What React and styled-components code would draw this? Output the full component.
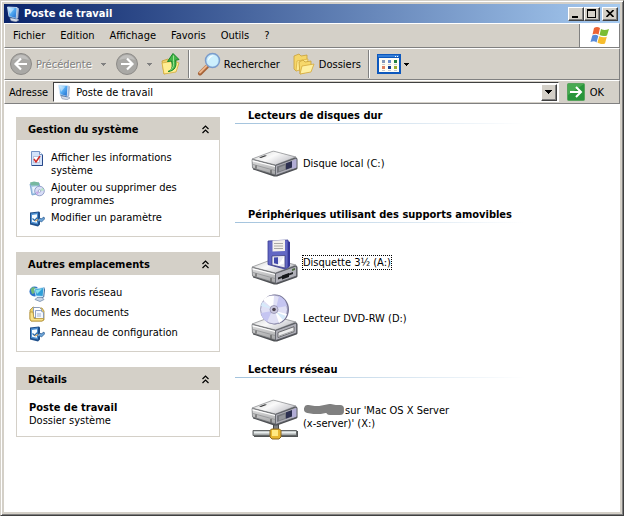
import styled, { createGlobalStyle } from "styled-components";

const GlobalStyle = createGlobalStyle`
  * {
    box-sizing: border-box;
  }
  body {
    margin: 0;
  }
  body, button, input {
    font-family: "DejaVu Sans Condensed", "DejaVu Sans", sans-serif;
    font-size: 11px;
    line-height: 13px;
    color: #000;
  }
  svg {
    display: block;
    flex-shrink: 0;
  }
`;

const Fenetre = styled.div`
  display: flex;
  flex-direction: column;
  min-height: 100vh;
  padding: 3px;
  background: #d4d0c8;
  border: 1px solid;
  border-color: #d4d0c8 #404040 #404040 #d4d0c8;
  box-shadow: inset 1px 1px #fff, inset -1px -1px #808080;
`;
const BarreTitre = styled.header`
  display: flex;
  align-items: center;
  height: 19px;
  padding: 0 2px 0 2px;
  gap: 2px;
  background: linear-gradient(90deg, #0a246a, #a6caf0);
  color: #fff;
`;
const Titre = styled.h1`
  flex: 1;
  margin: 0;
  font-size: 11px;
`;
const BoutonsFenetre = styled.div`
  display: flex;
`;
const BoutonFenetre = styled.button`
  display: flex;
  align-items: center;
  justify-content: center;
  width: 16px;
  height: 14px;
  padding: 0;
  margin-left: ${({ $espace }) => ($espace ? "2px" : "0")};
  background: #d4d0c8;
  border: 1px solid;
  border-color: #fff #404040 #404040 #fff;
  box-shadow: inset -1px -1px #808080;
`;
const Barre = styled.div`
  display: flex;
  align-items: center;
  height: ${({ $hauteur }) => $hauteur};
  padding: ${({ $marge }) => $marge || "0"};
  border-top: 1px solid #fff;
  border-left: 1px solid #fff;
  border-bottom: 1px solid #808080;
  border-right: 1px solid #808080;
`;
const Menu = styled.nav`
  display: flex;
  flex: 1;
  gap: 15px;
`;
const BoutonPlat = styled.button`
  display: flex;
  align-items: center;
  gap: ${({ $espace }) => $espace || "0"};
  padding: 0;
  border: 0;
  background: none;
  white-space: nowrap;

  &:disabled {
    color: #808080;
    text-shadow: 1px 1px #fff;
  }
`;
const Logo = styled.div`
  display: flex;
  align-items: center;
  justify-content: center;
  align-self: stretch;
  width: 40px;
  background: #fff;
  border-left: 1px solid #808080;
`;
const Outils = styled.div`
  display: flex;
  align-items: center;
  gap: ${({ $espace }) => $espace};
`;
const Separateur = styled.span`
  width: 2px;
  height: 28px;
  margin: 0 7px;
  border-left: 1px solid #808080;
  border-right: 1px solid #fff;
`;
const Champ = styled.div`
  display: flex;
  align-items: center;
  flex: 1;
  height: 20px;
  margin: 0 8px 0 5px;
  padding: 0 1px 0 3px;
  background: #fff;
  border: 1px solid;
  border-color: #404040 #fff #fff #404040;
`;
const Saisie = styled.input`
  flex: 1;
  min-width: 0;
  padding: 0 0 0 3px;
  border: 0;
  outline: 0;
  background: none;
`;
const BoutonListe = styled(BoutonFenetre)`
  height: 17px;
`;
const Contenu = styled.main`
  display: flex;
  flex: 1;
  background: #fff;
`;
const Volet = styled.aside`
  display: flex;
  flex-direction: column;
  flex-shrink: 0;
  gap: 15px;
  width: 216px;
  padding: 13px 0 13px 12px;
`;
const Panneau = styled.section`
  border: 1px solid #d4d0c8;
  border-top: 0;
`;
const EnTete = styled.div`
  display: flex;
  align-items: center;
  justify-content: space-between;
  height: 23px;
  padding: 2px 10px 0 11px;
  background: #d4d0c8;
`;
const TitrePanneau = styled.h2`
  margin: 0;
  font-size: 11px;
`;
const Corps = styled.div`
  display: flex;
  flex-direction: column;
  gap: 4px;
  padding: 11px 12px 9px;
`;
const Tache = styled.a`
  display: flex;
  gap: 6px;
  min-height: 16px;
  color: #000;
  text-decoration: none;
`;
const Detail = styled.p`
  margin: 0;
`;
const Lecteurs = styled.div`
  flex: 1;
  min-width: 0;
  padding-left: 15px;
`;
const Groupe = styled.section`
  padding-bottom: 16px;
`;
const TitreGroupe = styled.h2`
  height: 20px;
  margin: 0 0 15px;
  padding: 5px 0 0 13px;
  font-size: 11px;
  background: linear-gradient(90deg, #a3c3dd, #fff 290px) bottom / 100% 1px
    no-repeat;
`;
const Liste = styled.div`
  display: flex;
  flex-direction: column;
  align-items: flex-start;
  gap: 8px;
  padding-left: 16px;
`;
const Lecteur = styled.a`
  display: flex;
  align-items: center;
  gap: 4px;
  min-height: 48px;
  color: #000;
  text-decoration: none;
`;
const Nom = styled.span`
  max-width: 150px;
  outline: ${({ $actif }) => ($actif ? "1px dotted #000" : "none")};

  svg {
    display: inline-block;
    vertical-align: -1px;
  }
`;

const IconePoste = () => (
  <svg width="16" height="16" viewBox="0 0 16 16">
    <defs>
      <linearGradient id="ecran" x2="1" y2="1">
        <stop offset="0" stopColor="#bfe8ff" />
        <stop offset="0.45" stopColor="#57aff5" />
        <stop offset="1" stopColor="#1763c9" />
      </linearGradient>
    </defs>
    <path d="M4 12l6 0 3 2-3 1.700-5-1z" fill="#d5dce8" stroke="#7d8ba5" strokeWidth=".6" />
    <path d="M11 1.500l2 1-.8 9.500-2 1z" fill="#a9b6cf" />
    <path d="M1.500 1l9.500.5-.8 11L3 10.500z" fill="url(#ecran)" stroke="#dceafa" strokeWidth=".8" />
    <path d="M2.500 2l6 .4L4 8z" fill="#fff" opacity=".45" />
    <path d="M3 11l7.500 2" stroke="#285894" strokeWidth=".7" />
  </svg>
);

const IconeRond = ({ retour }) => (
  <svg width="24" height="24" viewBox="0 0 24 24">
    <circle cx="12" cy="12" r="10.5" fill="#a9a8a5" stroke="#8d8b88" />
    <path d="M4 8a9 9 0 0 1 16 0q-8-3-16 0" fill="#c0bfbd" />
    <path
      d={
        retour
          ? "M18 12H7M12 6.500L6.500 12l5.500 5.500"
          : "M6 12h11M12 6.500l5.500 5.500-5.500 5.500"
      }
      fill="none"
      stroke="#fff"
      strokeWidth="2.200"
    />
  </svg>
);

const Fleche = ({ couleur = "#000" }) => (
  <svg width="5" height="3" viewBox="0 0 5 3" shapeRendering="crispEdges">
    <path d="M0 0h5v1H4v1H3v1H2V2H1V1H0z" fill={couleur} />
  </svg>
);

const IconeParent = () => (
  <svg width="20" height="24" viewBox="0 0 20 24">
    <path d="M1 9l6-2 2 1.500 6-1.500v11L3 22z" fill="#eed06b" stroke="#c89e32" strokeWidth=".8" />
    <path d="M1 11l12-2 5 2-3 9L3 22z" fill="#ffed92" stroke="#d6ad3c" strokeWidth=".8" />
    <path
      d="M7 19.500c4-1 5-5 3.500-10.500L6.500 9.500 12 1.500l6 6-3.500.8C16 14 14 19 7 19.500z"
      fill="#43b649"
      stroke="#16852a"
    />
    <path d="M12.500 3.500v6c.5 4-.5 7-3 8.500" stroke="#a2e495" fill="none" />
  </svg>
);

const IconeLoupe = () => (
  <svg width="24" height="24" viewBox="0 0 24 24">
    <path d="M10 14.500L3 21.500" stroke="#a66338" strokeWidth="4" strokeLinecap="round" />
    <path d="M9.500 14L3 20.500" stroke="#edb58a" strokeWidth="2" strokeLinecap="round" />
    <circle cx="15.500" cy="8.500" r="7" fill="#bce7fb" stroke="#7c9ccb" strokeWidth="1.500" />
    <circle cx="15.500" cy="8.500" r="5.500" fill="#cdeffd" />
    <path d="M11 9a5 5 0 0 1 7-5c-4 0-5 2-7 5" fill="#fff" />
  </svg>
);

const IconeDossiers = () => (
  <svg width="24" height="22" viewBox="0 0 24 22">
    <path d="M2 3l5-2 2 2 6-1v11L4 18 2 16z" fill="#f5d66a" stroke="#c89f36" strokeWidth=".8" />
    <path d="M4 18L5 8l11-2-1 9z" fill="#ffeb92" stroke="#d8b044" strokeWidth=".8" />
    <path d="M7 9l4-2 2 2 6-1v10L8 21z" fill="#f7d86b" stroke="#c89f36" strokeWidth=".8" />
    <path d="M8 21l2-8 12-2-3 8z" fill="#fff0a1" stroke="#d5aa3b" strokeWidth=".8" />
  </svg>
);

const IconeAffichage = () => (
  <svg width="24" height="20" viewBox="0 0 24 20" shapeRendering="crispEdges">
    <rect width="24" height="20" rx="1" fill="#0d58bd" />
    <rect x="1" y="1" width="21" height="2" fill="#347ed7" />
    <path d="M18 2h1v1h-1zM20 2h1v1h-1z" fill="#fff" />
    <rect x="2" y="4" width="20" height="14" fill="#fffdf5" />
    <path d="M5 6h3v3H5z" fill="#8799bb" />
    <path d="M11 6h3v3h-3z" fill="#6b8dd0" />
    <path d="M17 6h3v3h-3z" fill="#258143" />
    <path d="M5 12h3v3H5z" fill="#df8060" />
    <path d="M11 12h3v3h-3z" fill="#173f92" />
    <path d="M17 12h3v3h-3z" fill="#9aae32" />
    <path d="M5 10h3M11 10h3M17 10h3M5 16h3M11 16h3M17 16h3" stroke="#c7cad0" />
  </svg>
);

const IconeWindows = () => (
  <svg width="20" height="20" viewBox="0 0 20 20">
    <path d="M4 2c2-1.500 4-1.500 6 0L8.500 8.800C7 7.500 5 7.500 2.500 8.500z" fill="#ec6333" />
    <path d="M11 3c3 1.500 5 1 8 0l-2 6.500c-3 1-5 .5-7.500-.5z" fill="#7bbd35" />
    <path d="M2.300 9.500c2.500-1 4-1 6 .5L6.500 16.500C5 15 3 15 .5 16z" fill="#5689d8" />
    <path d="M9.200 10.200c2.500 1 4.800 1.500 7.600.5L15 17.500c-3 1-5 .5-7.500-1z" fill="#f7bd2e" />
  </svg>
);

const IconeOk = () => (
  <svg width="18" height="18" viewBox="0 0 18 18">
    <rect x=".5" y=".5" width="17" height="17" rx="1" fill="#27953b" stroke="#58a35d" />
    <path d="M1 1h16L1 12z" fill="#59b35c" opacity=".7" />
    <path d="M3 9h11M9 4l5 5-5 5" stroke="#fff" strokeWidth="2" fill="none" />
  </svg>
);

const IconeInfos = () => (
  <svg width="16" height="16" viewBox="0 0 16 16">
    <path d="M2.500.5h8l3 3v11h-11z" fill="#d4e3fa" stroke="#7391c4" />
    <path d="M13.500 4v10.500H3" fill="none" stroke="#28498a" />
    <path d="M10.500.5v3h3" fill="#fff" stroke="#7494c3" />
    <rect x="4.500" y="5.500" width="6" height="6" fill="#fff" stroke="#b9c3dc" />
    <path d="M5 8l2 3 4-6" fill="none" stroke="#d12b29" strokeWidth="1.500" />
  </svg>
);

const IconeProgrammes = () => (
  <svg width="16" height="16" viewBox="0 0 16 16">
    <path d="M1 3l9-1 2 10-9 2z" fill="#a8c9e8" stroke="#6d9cca" strokeWidth=".8" />
    <path d="M1 1.500l4-1 5 1v3H2z" fill="#77b8a0" />
    <path d="M3 6l7-1 1 6-7 1z" fill="#e9f3fd" />
    <circle cx="10.500" cy="10" r="4.800" fill="#d9def8" stroke="#7e8dbb" strokeWidth=".8" />
    <path d="M10.500 10l3-3.500 1.500 3z" fill="#b8e6c6" />
    <path d="M10.500 10l-4 1 2 3z" fill="#c9a9e7" />
    <circle cx="10.500" cy="10" r="1.300" fill="#fff" stroke="#7d8bb4" strokeWidth=".6" />
  </svg>
);

const IconeParametre = () => (
  <svg width="16" height="16" viewBox="0 0 16 16">
    <path d="M1 1.500l9-1 1 1v12l-2 2-8-2z" fill="#1f4f8b" />
    <path d="M2 2.500l7-1v12l-7-1.500z" fill="#4d8fd0" />
    <path d="M3 4l5-.7v8.500l-5-1z" fill="#f5fbff" />
    <path d="M3.500 7.500l2 2 3-3" fill="none" stroke="#2a69a7" strokeWidth="1.200" />
    <path d="M8 9l3-2 1 1 3-2 .5 2-3 3-1.500-1-2 1z" fill="#6da5d8" stroke="#24568e" strokeWidth=".7" />
    <path d="M6 10l3-1.500" stroke="#d5a15e" strokeWidth="1.300" />
  </svg>
);

const IconeReseau = () => (
  <svg width="16" height="16" viewBox="0 0 16 16">
    <circle cx="5.500" cy="5.500" r="5" fill="#2e73c9" />
    <path d="M1.500 3l2.500-2 3 1-2 3 1 2-3 1z" fill="#70ba78" />
    <path d="M5.500 3l9.500-1.500-1 9-7-.5z" fill="#2f9fd8" stroke="#d0e9f7" strokeWidth=".8" />
    <path d="M6.500 4l6.500-1-5 5z" fill="#8be1eb" />
    <path d="M15 1.500l.7 1-1 8.500-2 1" stroke="#476d9d" fill="none" />
    <path d="M8 11.500l5 0 2 2-4 2-5-2z" fill="#c7d6e8" stroke="#637fa3" strokeWidth=".7" />
  </svg>
);

const IconeDocuments = () => (
  <svg width="16" height="16" viewBox="0 0 16 16">
    <path d="M1 4l3-3 3 1h6l2 3v9l-2 1H2l-1-2z" fill="#ecd06c" stroke="#ac8c36" strokeWidth=".8" />
    <path d="M4.500 1.500h6l2 2v8h-8z" fill="#fff" stroke="#738bb6" strokeWidth=".8" />
    <path d="M6.500 4.500h5l3 2v7h-8z" fill="#f4f8ff" stroke="#738bb6" strokeWidth=".8" />
    <path d="M8 8h4M8 10h4" stroke="#a4b3cc" />
    <path d="M1 6h3l1 6.500h9.500V14l-1.500 1H2l-1-2z" fill="#f9e28a" stroke="#b59334" strokeWidth=".8" />
  </svg>
);

const Chevrons = () => (
  <svg width="7" height="9" viewBox="0 0 7 9">
    <path d="M.5 4l3-3 3 3M.5 8l3-3 3 3" fill="none" stroke="#000" strokeWidth="1.200" />
  </svg>
);

const Boitier = ({ type }) => (
  <g>
    <defs>
      <linearGradient id={`dessus-${type}`} x2="1" y2=".6">
        <stop offset="0" stopColor="#cfd0d0" />
        <stop offset=".5" stopColor="#fafafa" />
        <stop offset="1" stopColor="#c2c2c8" />
      </linearGradient>
      <linearGradient id={`cote-${type}`} x2="0" y2="1">
        <stop offset="0" stopColor="#e0e0e0" />
        <stop offset="1" stopColor="#a0a1a3" />
      </linearGradient>
    </defs>
    <path d="M1.500 14L21 6q1.500-.6 3 0l21 5.500q1.500.5 1.500 2V22q0 1-1 1.500L26 30.500h-3L2 23.500z" fill="#4d4f53" />
    <path d="M1 13l20-7.500q1.500-.6 3 0l21 5.500-20.500 8z" fill={`url(#dessus-${type})`} stroke="#85878a" strokeWidth=".7" />
    <path d="M1 13.500l23.500 6V29L1.500 22z" fill={`url(#cote-${type})`} stroke="#6d7072" strokeWidth=".7" />
    <path d="M1.500 14.200l22.500 5.700v1L1.500 15.500z" fill="#fff" />
    <path d="M2 18.500l22 6" stroke="#909294" strokeWidth=".8" />
    <path d="M24.500 19.500L45.500 12v10l-21 7.500z" fill="#b0b0b8" stroke="#55575e" strokeWidth=".7" />
    <path d="M5 19.500v3M20 24v3.500" stroke="#444" />
    {type !== "disquette" && type !== "dvd" && (
      <>
        <path d="M8 11.500l6-2.300 2 .6-6 2.300z" fill="#3b3c3d" />
        <path d="M26 20.500l9-3.200v6.500L26 27z" fill="#77797f" />
        <path d="M28 21.500l6-2.200v4L28 25.500z" fill="#94969b" />
        <path d="M35 17.300l6-2.200v6.500L35 23.800z" fill="#2d3050" />
        <path d="M41 15.100l4.500-2v8.500L41 23z" fill="#b2add6" />
      </>
    )}
    {type === "disquette" && (
      <>
        <path d="M27 23.500l15-5.500v2l-15 5.500z" fill="#222426" />
        <path d="M31 21.500l7-2.500v4l-7 2.500z" fill="#15171a" />
        <path d="M41 15l3-1v2l-3 1z" fill="#4c6b3f" />
      </>
    )}
    {type === "dvd" && (
      <>
        <path d="M27 21.500l16-5.800v5L27 26.500z" fill="#ececec" stroke="#505256" strokeWidth=".8" />
        <path d="M28 25l14-5" stroke="#8e9094" strokeWidth=".8" />
      </>
    )}
  </g>
);

const IconeLecteur = ({ type }) => (
  <svg width="48" height="48" viewBox="0 0 48 48">
    {type === "disque" && (
      <g transform="translate(0 7)">
        <Boitier type="disque" />
      </g>
    )}
    {type === "disquette" && (
      <>
        <g transform="translate(0 16)">
          <Boitier type="disquette" />
        </g>
        <path d="M37 3l2 1v24l-2 2z" fill="#35369c" />
        <path d="M17 3l20-1v27.500l-3 1.500-17-4.500z" fill="#6267c4" stroke="#383b92" strokeWidth=".8" />
        <path d="M21.500 2.500l12.500-.6V13l-12.500.6z" fill="#f4f1ec" />
        <path d="M23 5.500h9M23 8h9M23 10.500h9" stroke="#aaa8a5" />
        <path d="M21 18l13-.6V30L21 27z" fill="#e8e8f3" stroke="#363775" strokeWidth=".7" />
        <path d="M23 19.500l4-.2v7l-4-1z" fill="#4149aa" />
        <path d="M33 18.500v7l-6 2z" fill="#fff" />
      </>
    )}
    {type === "dvd" && (
      <>
        <g transform="translate(0 17)">
          <Boitier type="dvd" />
        </g>
        <ellipse cx="24" cy="15.500" rx="14" ry="15" fill="#747293" />
        <ellipse cx="23" cy="15.500" rx="13.500" ry="14.500" fill="#e0e0f5" stroke="#8b8aab" strokeWidth=".8" />
        <path d="M22 15L12 6q5-5 11-4zM24 17l4 12q6-3 8-9z" fill="#fff" />
        <path d="M21 17L10 19q1 6 6 9z" fill="#c5c5f1" />
        <path d="M25 14l3-12q6 2 8 10z" fill="#c5c5f1" />
        <path d="M21 15L10 12l1-4zM25 18l10 4-3 4z" fill="#d6eafa" />
        <circle cx="23" cy="15.500" r="4" fill="#cbc9df" stroke="#918ead" strokeWidth=".8" />
        <circle cx="23" cy="15.500" r="1.800" fill="#4a414d" />
      </>
    )}
    {type === "reseau" && (
      <>
        <path d="M22.500 31h5v6h-5z" fill="#7d7f80" stroke="#454647" />
        <g transform="translate(0 2)">
          <Boitier type="reseau" />
        </g>
        <path d="M3 38h44v6H3z" fill="#505354" />
        <path d="M2 37.500h43.500v5H2z" fill="#a9adad" stroke="#65696a" />
        <path d="M3 38.500h42v2H3z" fill="#e8eded" />
        <path d="M20.500 36h8l1.500 1.500V44l-2 2h-7l-2-2v-6.500z" fill="#e7b62f" stroke="#8a6720" />
        <path d="M21 37h6v6h-6z" fill="#ffe982" />
      </>
    )}
  </svg>
);

const Rature = () => (
  <svg width="42" height="11" viewBox="0 0 42 11" aria-hidden="true">
    <path
      d="M5 5l6 1h6l5-1 5-1 5 1h5M27 7h10"
      fill="none"
      stroke="#808080"
      strokeWidth="8"
      strokeLinecap="round"
      strokeLinejoin="round"
    />
  </svg>
);

const menus = ["Fichier", "Edition", "Affichage", "Favoris", "Outils", "?"];

const panneaux = [
  {
    titre: "Gestion du système",
    taches: [
      { nom: "Afficher les informations système", Icone: IconeInfos },
      { nom: "Ajouter ou supprimer des programmes", Icone: IconeProgrammes },
      { nom: "Modifier un paramètre", Icone: IconeParametre },
    ],
  },
  {
    titre: "Autres emplacements",
    taches: [
      { nom: "Favoris réseau", Icone: IconeReseau },
      { nom: "Mes documents", Icone: IconeDocuments },
      { nom: "Panneau de configuration", Icone: IconeParametre },
    ],
  },
  { titre: "Détails" },
];

const groupes = [
  {
    titre: "Lecteurs de disques dur",
    lecteurs: [{ nom: "Disque local (C:)", type: "disque" }],
  },
  {
    titre: "Périphériques utilisant des supports amovibles",
    lecteurs: [
      { nom: "Disquette 3½ (A:)", type: "disquette", actif: true },
      { nom: "Lecteur DVD-RW (D:)", type: "dvd" },
    ],
  },
  {
    titre: "Lecteurs réseau",
    lecteurs: [
      { nom: "sur 'Mac OS X Server (x-server)' (X:)", type: "reseau", masque: true },
    ],
  },
];

function App() {
  return (
    <Fenetre>
      <GlobalStyle />
      <BarreTitre>
        <IconePoste />
        <Titre>Poste de travail</Titre>
        <BoutonsFenetre>
          <BoutonFenetre aria-label="Réduire">
            <svg width="10" height="8" shapeRendering="crispEdges">
              <path d="M1 6h6v2H1z" />
            </svg>
          </BoutonFenetre>
          <BoutonFenetre aria-label="Agrandir">
            <svg width="10" height="9" shapeRendering="crispEdges">
              <path d="M0 0h9v9H0zM1 2v6h7V2z" fillRule="evenodd" />
            </svg>
          </BoutonFenetre>
          <BoutonFenetre aria-label="Fermer" $espace>
            <svg width="8" height="7">
              <path d="M.5 0l7 7M7.500 0l-7 7" stroke="#000" strokeWidth="1.600" />
            </svg>
          </BoutonFenetre>
        </BoutonsFenetre>
      </BarreTitre>

      <Barre $hauteur="25px" $marge="0 0 0 8px">
        <Menu>
          {menus.map((menu) => (
            <BoutonPlat key={menu}>{menu}</BoutonPlat>
          ))}
        </Menu>
        <Logo>
          <IconeWindows />
        </Logo>
      </Barre>

      <Barre $hauteur="32px" $marge="0 4px">
        <Outils $espace="9px">
          <BoutonPlat disabled $espace="3px">
            <IconeRond retour />
            Précédente
          </BoutonPlat>
          <Fleche couleur="#808080" />
          <BoutonPlat disabled $espace="8px" aria-label="Suivante">
            <IconeRond />
            <Fleche couleur="#808080" />
          </BoutonPlat>
          <BoutonPlat aria-label="Dossier parent">
            <IconeParent />
          </BoutonPlat>
        </Outils>
        <Separateur />
        <Outils $espace="12px">
          <BoutonPlat $espace="3px">
            <IconeLoupe />
            Rechercher
          </BoutonPlat>
          <BoutonPlat $espace="3px">
            <IconeDossiers />
            Dossiers
          </BoutonPlat>
        </Outils>
        <Separateur />
        <BoutonPlat $espace="3px" aria-label="Affichage">
          <IconeAffichage />
          <Fleche />
        </BoutonPlat>
      </Barre>

      <Barre $hauteur="24px" $marge="0 15px 0 4px">
        <label htmlFor="adresse">Adresse</label>
        <Champ>
          <IconePoste />
          <Saisie id="adresse" defaultValue="Poste de travail" />
          <BoutonListe aria-label="Dérouler">
            <svg width="7" height="4" shapeRendering="crispEdges">
              <path d="M0 0h7v1H6v1H5v1H4v1H3V3H2V2H1V1H0z" />
            </svg>
          </BoutonListe>
        </Champ>
        <BoutonPlat $espace="5px">
          <IconeOk />
          OK
        </BoutonPlat>
      </Barre>

      <Contenu>
        <Volet>
          {panneaux.map(({ titre, taches }) => (
            <Panneau key={titre}>
              <EnTete>
                <TitrePanneau>{titre}</TitrePanneau>
                <BoutonPlat aria-label={`Réduire ${titre}`}>
                  <Chevrons />
                </BoutonPlat>
              </EnTete>
              <Corps>
                {taches ? (
                  taches.map(({ nom, Icone }) => (
                    <Tache key={nom} href="#">
                      <Icone />
                      {nom}
                    </Tache>
                  ))
                ) : (
                  <Detail>
                    <strong>Poste de travail</strong>
                    <br />
                    Dossier système
                  </Detail>
                )}
              </Corps>
            </Panneau>
          ))}
        </Volet>

        <Lecteurs>
          {groupes.map(({ titre, lecteurs }) => (
            <Groupe key={titre}>
              <TitreGroupe>{titre}</TitreGroupe>
              <Liste>
                {lecteurs.map(({ nom, type, actif, masque }) => (
                  <Lecteur key={nom} href="#">
                    <IconeLecteur type={type} />
                    <Nom $actif={actif}>
                      {masque && <Rature />}
                      {nom}
                    </Nom>
                  </Lecteur>
                ))}
              </Liste>
            </Groupe>
          ))}
        </Lecteurs>
      </Contenu>
    </Fenetre>
  );
}

export default App;
